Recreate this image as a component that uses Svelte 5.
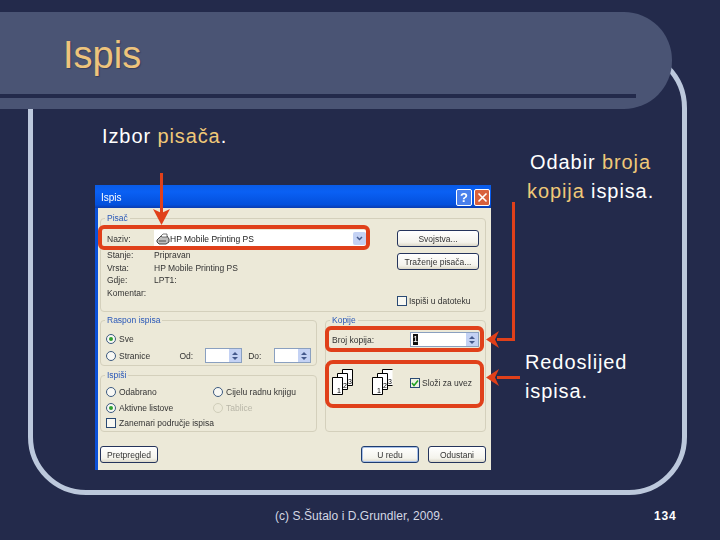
<script lang="ts">
  const infoRows = [
    { label: "Stanje:", value: "Pripravan" },
    { label: "Vrsta:", value: "HP Mobile Printing PS" },
    { label: "Gdje:", value: "LPT1:" },
    { label: "Komentar:", value: "" },
  ];
  // the second stack has no right edge on its back page in the reference
  const stacks = [{ back: "M10.5 .5h10v16h-10z" }, { back: "M20.5 .5h-10v16h10" }];
</script>

<div class="slide">
  <div class="frame"></div>
  <div class="titlebar">
    <h1>Ispis</h1>
    <div class="rule"></div>
  </div>

  <p class="txt t1">Izbor <span class="gold">pisača</span>.</p>
  <p class="txt t2">Odabir <span class="gold">broja</span><br /><span class="gold">kopija</span> ispisa.</p>
  <p class="txt t3">Redoslijed<br />ispisa.</p>

  <div class="dialog">
    <div class="dlg-title">
      <span>Ispis</span>
      <div class="dlg-btn help">?</div>
      <div class="dlg-btn close">
        <svg width="11" height="11" viewBox="0 0 11 11"><path d="M1.500 1.500 9.500 9.500M9.500 1.500 1.500 9.500" stroke="#fff" stroke-width="1.600" /></svg>
      </div>
    </div>

    <div class="dlg-body">
      <div class="group printer">
        <span class="legend">Pisač</span>
        <div class="printer-left">
          <div class="name-row">
            <span class="lbl">Naziv:</span>
            <div class="combo">
              <svg width="14" height="12" viewBox="0 0 14 12">
                <path d="M1 7 5 3h6l2 3v3l-3 2H3L1 9z" fill="#bdbdbd" stroke="#333" stroke-width=".9" />
                <path d="M5 3 7 1h4v3H6z" fill="#fff" stroke="#444" stroke-width=".7" />
                <path d="M3 8h7" stroke="#333" stroke-width=".8" />
              </svg>
              <span class="combo-text">HP Mobile Printing PS</span>
              <div class="drop">
                <svg width="7" height="5" viewBox="0 0 7 5"><path d="M1 1 3.500 3.500 6 1" fill="none" stroke="#44598c" stroke-width="1.500" /></svg>
              </div>
            </div>
          </div>
          <div class="info">
            {#each infoRows as row}
              <div class="info-row"><span class="lbl">{row.label}</span><span>{row.value}</span></div>
            {/each}
          </div>
        </div>
        <div class="printer-right">
          <button>Svojstva...</button>
          <button>Traženje pisača...</button>
          <label class="check file"><span class="box"></span>Ispiši u datoteku</label>
        </div>
      </div>

      <div class="middle">
        <div class="left-col">
          <div class="group range">
            <span class="legend">Raspon ispisa</span>
            <div class="opt"><span class="radio on"></span>Sve</div>
            <div class="opt pages">
              <span class="radio"></span><span class="pages-name">Stranice</span>
              <span class="od">Od:</span>
              <div class="spin"><div class="arrows"><i class="up"></i><i class="down"></i></div></div>
              <span class="do">Do:</span>
              <div class="spin"><div class="arrows"><i class="up"></i><i class="down"></i></div></div>
            </div>
          </div>
          <div class="group what">
            <span class="legend">Ispiši</span>
            <div class="what-grid">
              <div class="opt"><span class="radio"></span>Odabrano</div>
              <div class="opt"><span class="radio"></span>Cijelu radnu knjigu</div>
              <div class="opt"><span class="radio on"></span>Aktivne listove</div>
              <div class="opt off"><span class="radio"></span>Tablice</div>
            </div>
            <label class="check ignore"><span class="box big"></span>Zanemari područje ispisa</label>
          </div>
        </div>

        <div class="group copies">
          <span class="legend">Kopije</span>
          <div class="count">
            <span>Broj kopija:</span>
            <div class="spin wide"><span class="sel">1</span><div class="arrows"><i class="up"></i><i class="down"></i></div></div>
          </div>
          <div class="collate">
            {#each stacks as s}
              <svg class="stack" width="22" height="26" viewBox="0 0 22 26">
                <path d={s.back} fill="#fff" stroke="#000" />
                <path d="M5.500 4.500h10v16h-10z" fill="#fff" stroke="#000" />
                <path d="M.5 8.500h10v17h-10z" fill="#fff" stroke="#000" />
                <text x="18" y="15" class="num">3</text>
                <text x="13" y="19" class="num">2</text>
                <text x="7" y="24" class="num">1</text>
              </svg>
            {/each}
            <label class="check"><span class="box tick">
              <svg width="8" height="8" viewBox="0 0 8 8"><path d="M1 4 3 6.500 7 1.500" fill="none" stroke="#21a121" stroke-width="1.600" /></svg>
            </span>Složi za uvez</label>
          </div>
        </div>
      </div>

      <div class="footer">
        <button>Pretpregled</button>
        <div class="push"></div>
        <button class="default">U redu</button>
        <button>Odustani</button>
      </div>
    </div>
  </div>

  <div class="mark m1"></div>
  <div class="mark m2"></div>
  <div class="mark m3"></div>

  <svg class="arrows-layer" width="720" height="540">
    <g fill="none" stroke="#e0401a" stroke-width="3">
      <path d="M161.500 173V214" />
      <path d="M513.500 202V339.500H497" />
      <path d="M520 377.500H497" />
    </g>
    <g fill="#e0401a">
      <path d="M153 209 161.500 213 170 209 161.500 225z" />
      <path d="M499 331 495 339.500 499 348 486 339.500z" />
      <path d="M499 369 495 377.500 499 386 486 377.500z" />
    </g>
  </svg>

  <div class="copyright">(c) S.Šutalo i D.Grundler, 2009.</div>
  <div class="pagenum">134</div>
</div>

<style>
  :global(body) {
    margin: 0;
    background: #232a4b;
  }

  .slide {
    position: relative;
    width: 720px;
    height: 540px;
    overflow: hidden;
    background: #232a4b;
    font-family: "Liberation Sans", Arial, sans-serif;
    color: #fff;
  }

  .frame {
    position: absolute;
    left: 28px;
    top: 48px;
    width: 649px;
    height: 437px;
    border: 5px solid #bcc8dc;
    border-radius: 0 60px 58px 58px;
  }

  .titlebar {
    position: absolute;
    left: 0;
    top: 12px;
    width: 672px;
    height: 97px;
    background: #4a5474;
    border-radius: 0 48px 48px 0;
  }

  h1 {
    margin: 0;
    padding: 21px 0 0 63px;
    font-size: 38px;
    line-height: 44px;
    font-weight: 400;
    color: #eec47c;
    text-shadow: 1px 1px 1px #363d5c;
  }

  .rule {
    position: absolute;
    left: 0;
    top: 82px;
    width: 636px;
    height: 4px;
    background: #232a4b;
  }

  .txt {
    position: absolute;
    margin: 0;
    font-size: 20px;
    line-height: 28.500px;
    letter-spacing: 0.9px;
    white-space: nowrap;
  }

  .t1 { left: 102px; top: 122px; }
  .t2 { left: 527px; top: 148px; text-align: center; }
  .t3 { left: 525px; top: 348px; }

  .gold { color: #f0c878; }

  .dialog {
    position: absolute;
    left: 95px;
    top: 185px;
    width: 396px;
    height: 285px;
    display: flex;
    flex-direction: column;
    background: #ece9d8;
    color: #333;
    font-size: 8.500px;
    line-height: 12px;
    border-left: 3px solid #0a50d8;
    box-sizing: border-box;
    filter: blur(0.3px);
  }

  .dlg-title {
    height: 23px;
    margin-left: -3px;
    flex: none;
    display: flex;
    align-items: center;
    gap: 2px;
    padding: 2px 1px 0 5px;
    box-sizing: border-box;
    background: linear-gradient(#0a5ce8, #0a60f4 30%, #0350dc 85%, #0a3cb0);
    color: #fff;
    font-size: 10px;
  }

  .dlg-title span {
    flex: 1;
    padding-left: 1px;
  }

  .dlg-btn {
    width: 16px;
    height: 17px;
    border: 1px solid #fff;
    border-radius: 2px;
    box-sizing: border-box;
    display: flex;
    align-items: center;
    justify-content: center;
    font-size: 13px;
    font-weight: 700;
  }

  .help { background: #4a80ec; }
  .close { background: #d8603c; }

  .dlg-body {
    flex: 1;
    display: flex;
    flex-direction: column;
    padding: 10px 5px 7px 2px;
    min-height: 0;
  }

  .group {
    position: relative;
    border: 1px solid #d4d0bc;
    border-radius: 4px;
    box-sizing: border-box;
  }

  .legend {
    position: absolute;
    left: 4px;
    top: -6px;
    padding: 0 2px;
    background: #ece9d8;
    color: #2a58b8;
    font-size: 8.500px;
    line-height: 11px;
  }

  .printer {
    height: 94px;
    display: flex;
    padding: 11px 6px 0 6px;
  }

  .printer-left { width: 260px; }

  .name-row {
    display: flex;
    align-items: center;
  }

  .name-row .lbl { width: 47px; }

  .combo {
    width: 213px;
    height: 17px;
    box-sizing: border-box;
    background: #fff;
    display: flex;
    align-items: center;
    padding: 0 1px 0 2px;
    color: #222;
  }

  .combo-text { flex: 1; }

  .drop {
    width: 13px;
    height: 13px;
    background: #c4d2f4;
    border-radius: 2px;
    display: flex;
    align-items: center;
    justify-content: center;
  }

  .info { padding-top: 2px; }

  .info-row {
    display: flex;
    height: 12.700px;
  }

  .info-row .lbl { width: 47px; }

  .printer-right {
    margin-left: 30px;
    width: 82px;
    display: flex;
    flex-direction: column;
    gap: 6px;
  }

  button {
    height: 17px;
    padding: 0;
    box-sizing: border-box;
    border: 1px solid #25345c;
    border-radius: 3px;
    background: linear-gradient(#fff, #f4f3ec 75%, #dcd8c8);
    color: #333;
    font: inherit;
    white-space: nowrap;
  }

  .check {
    display: flex;
    align-items: center;
    gap: 2px;
    white-space: nowrap;
  }

  .file { margin-top: 19px; }

  .box {
    width: 10px;
    height: 10px;
    box-sizing: border-box;
    border: 1px solid #2a4a74;
    background: #f8f8f2;
    flex: none;
  }

  .box.big { margin-right: 1px; }

  .tick {
    display: flex;
    align-items: center;
    justify-content: center;
    background: #eef2e4;
  }

  .middle {
    display: flex;
    gap: 8px;
    margin-top: 8px;
  }

  .left-col {
    width: 217px;
    display: flex;
    flex-direction: column;
    gap: 9px;
  }

  .range {
    height: 46px;
    padding: 10px 5px 0;
  }

  .opt {
    display: flex;
    align-items: center;
    gap: 3px;
    height: 15px;
    white-space: nowrap;
  }

  .pages { margin-top: 2px; }
  .pages-name { width: 58px; }
  .od { width: 23px; }
  .do { width: 23px; margin-left: 3px; }

  .radio {
    position: relative;
    width: 10px;
    height: 10px;
    box-sizing: border-box;
    border: 1px solid #3c5a80;
    border-radius: 50%;
    background: #f8f8f4;
    flex: none;
  }

  .radio.on::after {
    content: "";
    position: absolute;
    left: 2px;
    top: 2px;
    width: 4px;
    height: 4px;
    border-radius: 50%;
    background: #2fa02f;
  }

  .off { color: #b8b6a8; }
  .off .radio { border-color: #d0ceba; background: transparent; }

  .spin {
    width: 37px;
    height: 15px;
    box-sizing: border-box;
    border: 1px solid #8aa0c0;
    background: #fff;
    display: flex;
    justify-content: flex-end;
    align-items: stretch;
    flex: none;
  }

  .spin.wide {
    width: 69px;
    justify-content: space-between;
    color: #000;
  }

  .sel {
    background: #111;
    color: #fff;
    width: 5px;
    margin: 1px 0 1px 2px;
    font-size: 9px;
    line-height: 11px;
    text-align: center;
  }

  .arrows {
    width: 12px;
    background: #c4d2f4;
    display: flex;
    flex-direction: column;
    align-items: center;
    justify-content: center;
    gap: 2px;
  }

  .arrows i {
    width: 0;
    height: 0;
    border-left: 3px solid transparent;
    border-right: 3px solid transparent;
  }

  .arrows .up { border-bottom: 3px solid #44598c; }
  .arrows .down { border-top: 3px solid #44598c; }

  .what {
    height: 57px;
    padding: 8px 5px 0;
  }

  .what-grid {
    display: grid;
    grid-template-columns: 107px 1fr;
    row-gap: 1px;
  }

  .ignore { height: 15px; }

  .copies {
    flex: 1;
    padding: 11px 6px 0;
  }

  .count {
    display: flex;
    align-items: center;
    justify-content: space-between;
    height: 15px;
  }

  .collate {
    display: flex;
    align-items: flex-start;
    margin-top: 22px;
  }

  .stack {
    margin-right: 18px;
    flex: none;
  }

  .num {
    font-size: 7px;
    fill: #000;
    text-anchor: middle;
  }

  .collate .check {
    margin: 8px 0 0 -2px;
  }

  .footer {
    display: flex;
    gap: 9px;
    margin-top: 14px;
  }

  .footer button { width: 58px; }
  .footer .push { flex: 1; }
  .footer .default {
    border-color: #1e3c70;
    box-shadow: inset 0 0 0 1px #a8c0e8;
  }

  .mark {
    position: absolute;
    box-sizing: border-box;
    border: 4px solid #e0401a;
    border-radius: 6px;
  }

  .m1 { left: 98px; top: 225px; width: 272px; height: 25px; }
  .m2 { left: 325px; top: 326px; width: 159px; height: 26px; }
  .m3 { left: 325px; top: 360px; width: 159px; height: 48px; border-radius: 8px; }

  .arrows-layer {
    position: absolute;
    left: 0;
    top: 0;
    pointer-events: none;
  }

  .copyright {
    position: absolute;
    left: 275px;
    top: 509px;
    font-size: 12px;
    line-height: 14px;
    color: #d4d8e4;
    letter-spacing: 0.05px;
  }

  .pagenum {
    position: absolute;
    left: 654px;
    top: 509px;
    font-size: 12px;
    line-height: 14px;
    font-weight: 700;
    letter-spacing: 0.8px;
  }
</style>
